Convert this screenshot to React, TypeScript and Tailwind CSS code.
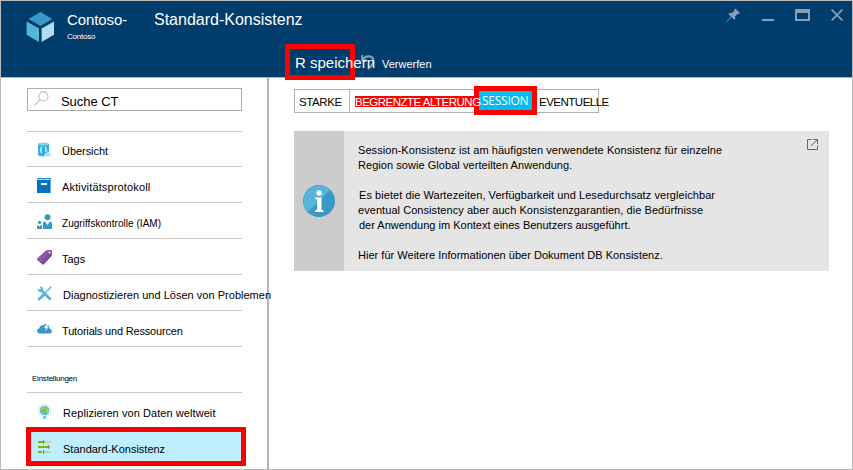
import type { ReactNode } from 'react';

const DatabaseIcon = () => (
  <svg width="16" height="15" viewBox="0 0 16 15">
    <path d="M1 2.2C1 .2 12 .2 12 2.2V12.8C12 15 1 15 1 12.8Z" fill="#32b1e4" />
    <ellipse cx="6.5" cy="2.2" rx="5" ry="1.3" fill="#8bd3ef" />
    <path d="M5 5C3.8 5 4.6 7.8 3.2 8C4.6 8.2 3.8 11 5 11M8 5C9.2 5 8.4 7.8 9.8 8C8.6 8.2 9 9 8.8 10" fill="none" stroke="#fff" strokeWidth="1.1" />
    <path d="M8.6 14.5C7.1 14 7.4 11.8 9.1 11.9C9.6 9.6 12.3 9.6 12.5 11.7C14.8 11.8 14.8 14.5 13 14.5Z" fill="#a9ddf2" stroke="#fff" strokeWidth=".6" />
  </svg>
);

const BookIcon = () => (
  <svg width="15" height="15" viewBox="0 0 15 15">
    <path d="M1.5 0H14V15H0V1.5Z" fill="#0072c6" />
    <path d="M1.5.7H13.6V2H.7Z" fill="#b5d8ef" />
    <path d="M13.5 1.5V15" stroke="#6daedd" />
    <rect x="4" y="5" width="6" height="2" fill="#fff" />
  </svg>
);

const PeopleIcon = () => (
  <svg width="15" height="15" viewBox="0 0 15 15" fill="#3999c6">
    <circle cx="10.5" cy="3.3" r="3" />
    <path d="M6 15V9.5Q6 7.5 8 7.5L10.4 11L13 7.5Q15 7.5 15 9.5V15Z" />
    <circle cx="2.6" cy="8.4" r="1.7" />
    <path d="M0 15V12Q0 11 1 11L2.6 12.8L4 11Q5 11 5 12V15Z" />
  </svg>
);

const TagIcon = () => (
  <svg width="15" height="15" viewBox="0 0 15 15">
    <path d="M0 9L8.5.9Q9 .4 10 .4L13.5 0Q14.8 0 14.9 1.2V5Q14.9 6 14.2 6.6L7 14.3Q6 15 5.2 14.2L.5 10.2Q0 9.6 0 9Z" fill="#804998" />
    <path d="M0 9L8.5.9Q9 .4 10 .4L13.5 0L3.7 13L.5 10.2Q0 9.6 0 9Z" fill="#8d58a3" />
    <circle cx="12.5" cy="2.6" r="1" fill="#fff" />
  </svg>
);

const ToolsIcon = () => (
  <svg width="15" height="15" viewBox="0 0 15 15" fill="none">
    <path d="M14.3.8L8 7" stroke="#59b4d9" strokeWidth="1.3" />
    <path d="M7 8.5L2.2 13" stroke="#59b4d9" strokeWidth="3" strokeLinecap="round" />
    <path d="M4 4L12.8 12.8" stroke="#59b4d9" strokeWidth="2.8" strokeLinecap="round" />
    <path d="M2.8 1C5.4.4 6.2 2 5.8 4.2L4.3 5.7C2 6 .4 4.8 1 2.8L2.9 4L4.2 2.7Z" fill="#59b4d9" stroke="#59b4d9" strokeWidth=".4" />
  </svg>
);

const CloudIcon = () => (
  <svg width="15" height="15" viewBox="0 0 15 15">
    <path d="M2.6 11.5C-.7 11.5 -.8 6.4 2.4 6.2C2.8 3.5 5.4 3 6.3 3.6C7.2 .8 12 1 12.1 4.9C12.6 6 12.3 6.6 13 6.8C15.7 7.6 15.4 11.5 13 11.5Z" fill="#3999c6" />
    <path d="M9.7 1.5L7.2 6H9L7.9 9.3L11.8 4.8H9.8L12 1.5Z" fill="#fff" />
  </svg>
);

const GlobeIcon = () => (
  <svg width="15" height="15" viewBox="0 0 15 15">
    <circle cx="7.5" cy="6.5" r="6" fill="none" stroke="#b8dff0" strokeWidth="1" strokeDasharray="2.5 .8" />
    <circle cx="7.5" cy="6.5" r="4.8" fill="#59b4d9" />
    <path d="M4 4Q5 1.9 7.6 2L8.5 3.6L6.4 6L4.6 6.8L3 6ZM9.5 3L11.7 5V8L10 9.6L8.3 7.6ZM5 8L7.5 9L7 11L4.8 9.8Z" fill="#a7cf36" />
    <path d="M7.5 11.8V13.5" stroke="#3999c6" />
    <path d="M5.2 14.5Q7.5 11.8 9.8 14.5Z" fill="#3999c6" />
  </svg>
);

const SlidersIcon = () => (
  <svg width="15" height="15" viewBox="0 0 15 15">
    <path d="M1 3H6M1 8H11M1 13H5" stroke="#7fba00" strokeWidth="2" />
    <path d="M7 3H14M12 8H14M7 13H14" stroke="#c3d6a0" strokeWidth="2" />
    <path d="M6.5 1.3V4.7M11.5 6.3V9.7M6.5 11.3V14.7" stroke="#7a7a7a" strokeWidth="1.2" />
  </svg>
);

const NavRow = ({ icon, label, className = 'text-[11px]' }: { icon: ReactNode; label: string; className?: string }) => (
  <div className="flex h-9 items-end border-b border-[#c8c8c8] pl-[10px]">
    <div className="mb-[9px] w-[25px] shrink-0">{icon}</div>
    <span className={`mb-[7px] whitespace-nowrap leading-[15px] ${className}`}>{label}</span>
  </div>
);

const Header = () => (
  <header className="flex h-[77px] border-b border-[#b5b5b5] bg-[#003c6c] text-white">
    <svg className="ml-[25px] mt-[10px] shrink-0" width="30" height="32" viewBox="26 11 30 32">
      <path d="M40.5 12L52.3 19L40.5 26L28.5 19Z" fill="#3999c6" />
      <path d="M26.6 21.5L39 28.5V42L26.6 34.8Z" fill="#59b4d9" />
      <path d="M54 21.5L41.6 28.5V42L54 34.8Z" fill="#b1dcec" />
    </svg>
    <div className="w-[97px] shrink-0 pl-[11px] pt-[10px]">
      <div className="whitespace-nowrap text-[15px] leading-[18px] tracking-[-0.1px]">Contoso-</div>
      <div className="pt-[3px] text-[8px] leading-[10px] tracking-[-0.22px]">Contoso</div>
    </div>
    <div className="flex-1 pl-px pt-[10px]">
      <div className="text-[16px] leading-[18px]">Standard-Konsistenz</div>
      <div className="relative z-20 ml-[141px] flex pt-[25px]">
        <span className="w-[65px] whitespace-nowrap text-[15px] leading-[18px]">R speichern</span>
        <svg className="relative z-[-1]" width="16" height="18" viewBox="0 0 16 18" fill="none" stroke="#7f9db5" strokeWidth="2.2">
          <path d="M2.2 1V6.5H7.5M2.5 6C6 .4 13.5 1.6 13.5 7C13.5 10.5 11 12.5 8 15" />
        </svg>
        <span className="ml-[6px] mt-[3px] text-[11px] leading-[15px]">Verwerfen</span>
      </div>
    </div>
    <div className="flex h-6 w-[126px] shrink-0 items-start pt-[7px] text-[#83a0b8]">
      <svg width="15" height="15" viewBox="0 0 15 15" fill="currentColor">
        <path d="M9.3.4L14 5.1L12.8 6.1L11.8 5.8L9 8.5L9.3 10.7L8.2 11.8L5.5 9.1L.8 13.8L.3 14L.5 13.3L4.9 8.4L2.4 5.9L3.5 4.8L5.7 5.3L8.5 2.5L8.2 1.4Z" />
      </svg>
      <div className="ml-[21px] mt-[11px] h-[2px] w-[12px] bg-[#83a0b8]" />
      <div className="ml-[21px] mt-[1px] h-[12px] w-[15px] border-2 border-t-4 border-[#83a0b8]" />
      <svg className="ml-[21px] mt-[1px]" width="12" height="12" viewBox="0 0 12 12" stroke="currentColor" strokeWidth="1.8">
        <path d="M.6.6L11.4 11.4M11.4.6L.6 11.4" />
      </svg>
    </div>
  </header>
);

const Sidebar = () => (
  <aside className="w-[268px] shrink-0 border-r-2 border-[#b3b3b3] pl-[26px] pt-[10px]">
    <div className="flex h-[23px] w-[215px] items-center border border-[#acacac]">
      <svg className="mb-[2px] ml-[6px]" width="15" height="15" viewBox="0 0 15 15" fill="none" stroke="#bdbdbd" strokeWidth="1.1">
        <circle cx="9.5" cy="5.4" r="4.5" />
        <path d="M6.2 8.6L.5 14.4" />
      </svg>
      <span className="ml-[12px] mt-[4px] text-[13px] leading-[16px] tracking-[-0.05px]">Suche CT</span>
    </div>
    <nav className="mt-[20px] w-[215px] border-t border-[#c8c8c8]">
      <div className="-mt-px">
        <NavRow icon={<DatabaseIcon />} label="Übersicht" className="text-[11px] tracking-[-0.05px]" />
        <NavRow icon={<BookIcon />} label="Aktivitätsprotokoll" className="text-[11px] tracking-[0.15px]" />
        <NavRow icon={<PeopleIcon />} label="Zugriffskontrolle (IAM)" className="text-[10px] tracking-[0.04px]" />
        <NavRow icon={<TagIcon />} label="Tags" />
        <NavRow icon={<ToolsIcon />} label="Diagnostizieren und Lösen von Problemen" className="relative left-px z-10 text-[11px] tracking-[0.02px]" />
        <NavRow icon={<CloudIcon />} label="Tutorials und Ressourcen" className="text-[11px] tracking-[-0.18px]" />
      </div>
    </nav>
    <div className="h-[46px] w-[215px] border-b border-[#c8c8c8] pl-[5px] pt-[27px] text-[8px] leading-[10px] tracking-[-0.23px]">Einstellungen</div>
    <div className="flex h-[34px] items-center pl-[10px]">
      <div className="w-[26px] pt-[2px]"><GlobeIcon /></div>
      <span className="mt-[6px] whitespace-nowrap text-[11px] leading-[15px] tracking-[0.07px]">Replizieren von Daten weltweit</span>
    </div>
    <div className="-ml-px flex h-[39px] w-[220px] items-center border-5 border-[#ff0000] bg-[#bfeeff] pl-[6px]">
      <div className="mb-px w-[26px]"><SlidersIcon /></div>
      <span className="mt-[5px] text-[11px] leading-[15px]">Standard-Konsistenz</span>
    </div>
  </aside>
);

const Tabs = () => (
  <div className="relative flex h-[24px] w-[305px] whitespace-nowrap border border-[#b0b0b0] text-[11.5px] leading-[13px]">
    <div className="w-[55px] shrink-0 border-r border-[#b0b0b0] pl-[4px] pt-[6px] tracking-[-0.4px]">STARKE</div>
    <div className="w-[130px] shrink-0 pl-[5px] pt-[6px]">
      <div className="h-[11px] w-[125px] bg-[#ff0000]" />
    </div>
    <div className="ml-[57px] h-[22px] pl-[2px] pt-[6px] tracking-[-0.5px]">EVENTUELLE</div>
    <div className="absolute left-[179px] top-[-4px] h-[29px] w-[63px] border-5 border-[#ff0000] bg-[#00bcf2] pl-[3px] pt-[2px] font-['Open_Sans',sans-serif] text-[12px] leading-[15px] tracking-[-0.25px] text-white">SESSION</div>
    <span className="absolute left-[60px] top-[6px] text-white tracking-[-0.5px]">BEGRENZTE ALTERUNG</span>
  </div>
);

const InfoPanel = () => (
  <section className="mt-[18px] flex h-[140px] w-[535px] bg-[#e5e5e5]">
    <div className="flex w-[50px] shrink-0 items-center justify-center bg-[#cccccc]">
      <svg width="32" height="32" viewBox="0 0 32 32">
        <circle cx="16" cy="16" r="16" fill="#3999c6" />
        <path d="M4.7 27.3A16 16 0 0 1 27.3 4.7Z" fill="#59b4d9" />
        <circle cx="16.2" cy="7.9" r="2.7" fill="#fff" />
        <path d="M12 12.5H18.5V24.5L20.5 25.5V27H12V25.5L14.2 24.5V14.5L12 13.7Z" fill="#fff" />
      </svg>
    </div>
    <div className="flex-1 whitespace-nowrap pl-[14px] pt-[12px] text-[11px] leading-[15px] tracking-[0.06px]">
      <p className="tracking-[0.065px]">Session-Konsistenz ist am häufigsten verwendete Konsistenz für einzelne</p>
      <p className="tracking-[0.05px]">Region sowie Global verteilten Anwendung.</p>
      <p className="pl-px pt-[15px]">Es bietet die Wartezeiten, Verfügbarkeit und Lesedurchsatz vergleichbar</p>
      <p>eventual Consistency aber auch Konsistenzgarantien, die Bedürfnisse</p>
      <p className="pl-px tracking-[0px]">der Anwendung im Kontext eines Benutzers ausgeführt.</p>
      <p className="pt-[15px] tracking-[0.02px]">Hier für Weitere Informationen über Dokument DB Konsistenz.</p>
    </div>
    <svg className="mr-[11px] mt-[8px] shrink-0" width="11" height="11" viewBox="0 0 11 11" fill="none" stroke="#666" strokeWidth="1">
      <path d="M4.5.5H.5V10.5H10.5V6.5M6 .5H10.5V5M10.5.5L4 7" />
    </svg>
  </section>
);

export default function App() {
  return (
    <div className="relative flex h-[470px] w-[853px] flex-col overflow-hidden border border-[#b8b8b8] bg-white font-['Liberation_Sans',Arial,sans-serif] text-black">
      <Header />
      <div className="flex min-h-0 flex-1">
        <Sidebar />
        <main className="pl-[25px] pt-[11px]">
          <Tabs />
          <InfoPanel />
        </main>
      </div>
      <div className="absolute left-[284px] top-[43px] z-10 h-[36px] w-[70px] border-5 border-[#ff0000]" />
    </div>
  );
}
